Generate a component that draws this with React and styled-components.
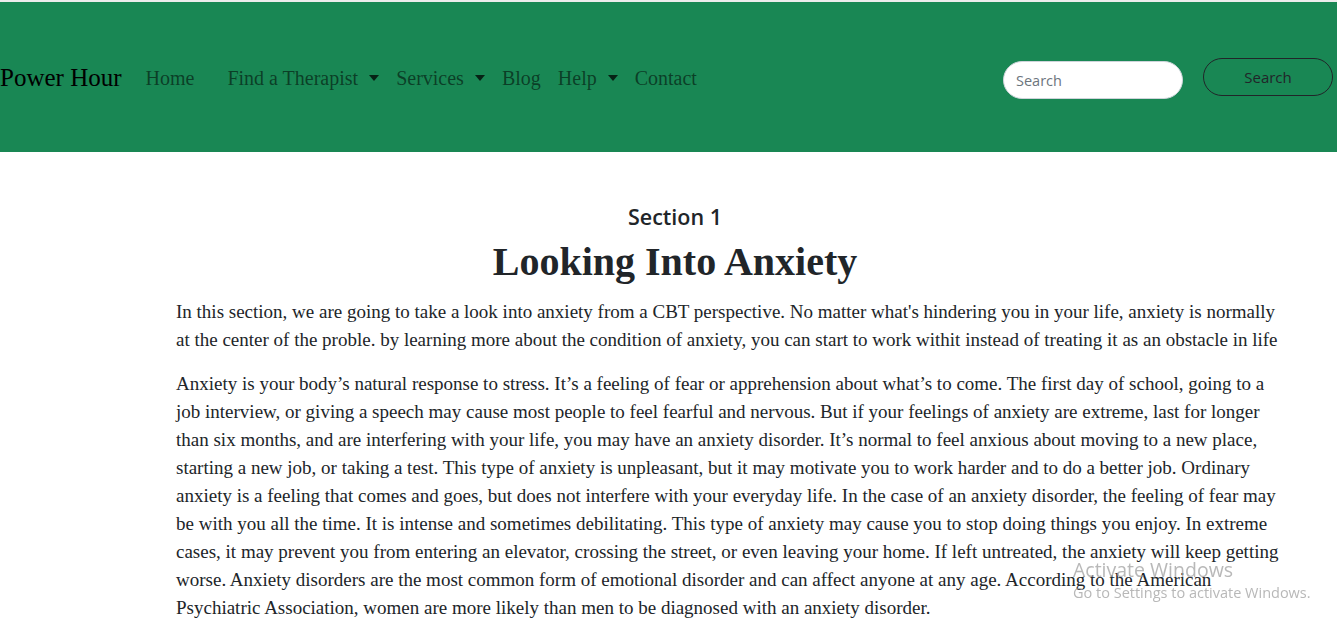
import React from "react";
import styled, { createGlobalStyle } from "styled-components";

const GlobalStyle = createGlobalStyle`
  html, body {
    margin: 0;
    padding: 0;
    background: #fff;
    overflow: hidden;
  }
  body {
    font-family: "Liberation Serif", "Times New Roman", serif;
    color: #212529;
  }
`;

const navLinks = [
  { label: "Home", wide: true },
  { label: "Find a Therapist", caret: true },
  { label: "Services", caret: true },
  { label: "Blog" },
  { label: "Help", caret: true },
  { label: "Contact" },
];

const paragraphs = [
  "In this section, we are going to take a look into anxiety from a CBT perspective. No matter what's hindering you in your life, anxiety is normally at the center of the proble. by learning more about the condition of anxiety, you can start to work withit instead of treating it as an obstacle in life",
  "Anxiety is your body’s natural response to stress. It’s a feeling of fear or apprehension about what’s to come. The first day of school, going to a job interview, or giving a speech may cause most people to feel fearful and nervous. But if your feelings of anxiety are extreme, last for longer than six months, and are interfering with your life, you may have an anxiety disorder. It’s normal to feel anxious about moving to a new place, starting a new job, or taking a test. This type of anxiety is unpleasant, but it may motivate you to work harder and to do a better job. Ordinary anxiety is a feeling that comes and goes, but does not interfere with your everyday life. In the case of an anxiety disorder, the feeling of fear may be with you all the time. It is intense and sometimes debilitating. This type of anxiety may cause you to stop doing things you enjoy. In extreme cases, it may prevent you from entering an elevator, crossing the street, or even leaving your home. If left untreated, the anxiety will keep getting worse. Anxiety disorders are the most common form of emotional disorder and can affect anyone at any age. According to the American Psychiatric Association, women are more likely than men to be diagnosed with an anxiety disorder.",
];

export default function App() {
  return (
    <>
      <GlobalStyle />
      <Page>
        <Navbar>
          <Brand href="#">Power Hour</Brand>
          <NavList>
            {navLinks.map((link) => (
              <NavItem key={link.label}>
                {link.label}
                {link.caret && <Caret />}
              </NavItem>
            ))}
          </NavList>
          <SearchForm onSubmit={(e) => e.preventDefault()}>
            <SearchInput type="search" placeholder="Search" />
            <SearchButton type="submit">Search</SearchButton>
          </SearchForm>
        </Navbar>

        <Main>
          <Heading>
            <SectionLabel>Section 1</SectionLabel>
            <Title>Looking Into Anxiety</Title>
          </Heading>
          <Body>
            {paragraphs.map((text, i) => (
              <Paragraph key={i}>{text}</Paragraph>
            ))}
          </Body>
        </Main>

        <Watermark>
          <WatermarkTitle>Activate Windows</WatermarkTitle>
          <WatermarkSub>Go to Settings to activate Windows.</WatermarkSub>
        </Watermark>
      </Page>
    </>
  );
}

const Page = styled.div`
  padding-top: 2px;
  min-height: 628px;
  background: linear-gradient(#ececec 0 2px, #fff 2px);
`;

const Navbar = styled.nav`
  height: 150px;
  background: #198754;
  display: flex;
  align-items: center;
`;

const Brand = styled.a`
  font-size: 25px;
  color: #000;
  text-decoration: none;
  margin-right: 24px;
  line-height: 1;
`;

const NavList = styled.ul`
  list-style: none;
  margin: 0;
  padding: 0;
  display: flex;
  align-items: center;
  flex: 1;
  padding-top: 2px;
`;

const NavItem = styled.li`
  font-size: 20px;
  color: rgba(0, 0, 0, 0.55);
  padding: 0 8.5px;
  display: flex;
  align-items: center;
  cursor: pointer;
  &:first-child {
    padding: 0 33px 0 0;
  }
  &:nth-child(2) {
    padding-left: 0;
  }
`;

const Caret = styled.span`
  display: inline-block;
  margin-left: 11px;
  width: 0;
  height: 0;
  border-top: 6px solid rgba(0, 0, 0, 0.75);
  border-left: 5px solid transparent;
  border-right: 5px solid transparent;
`;

const SearchForm = styled.form`
  display: flex;
  align-items: center;
  gap: 20px;
  margin-right: 4px;
`;

const SearchInput = styled.input`
  width: 180px;
  height: 38px;
  box-sizing: border-box;
  margin-top: 6px;
  border: 1px solid #ced4da;
  border-radius: 19px;
  padding: 0 12px;
  font-family: "Open Sans", "Noto Sans", sans-serif;
  font-size: 14.5px;
  color: #212529;
  outline: none;
  &::placeholder {
    color: #6c757d;
  }
`;

const SearchButton = styled.button`
  width: 130px;
  height: 38px;
  box-sizing: border-box;
  border: 1px solid #212529;
  border-radius: 19px;
  background: transparent;
  font-family: "Open Sans", "Noto Sans", sans-serif;
  font-size: 15px;
  color: #212529;
  cursor: pointer;
`;

const Main = styled.main`
  padding-top: 52px;
`;

const Heading = styled.header`
  text-align: center;
  padding-left: 13px;
`;

const SectionLabel = styled.h4`
  margin: 0;
  font-family: "Open Sans", "Noto Sans", sans-serif;
  font-size: 21.5px;
  font-weight: 600;
  line-height: 1.2;
`;

const Title = styled.h1`
  margin: 8px 0 12px;
  font-size: 40px;
  font-weight: 700;
  line-height: 1.2;
`;

const Body = styled.section`
  margin-left: 176px;
  width: 1108px;
`;

const Paragraph = styled.p`
  margin: 0 0 16px;
  font-size: 19px;
  line-height: 28px;
`;

const Watermark = styled.div`
  position: fixed;
  left: 1073px;
  top: 558px;
  font-family: "Open Sans", "Noto Sans", sans-serif;
  color: rgba(160, 160, 160, 0.75);
  pointer-events: none;
`;

const WatermarkTitle = styled.div`
  font-size: 19.5px;
  line-height: 24px;
`;

const WatermarkSub = styled.div`
  font-size: 14.5px;
  line-height: 18px;
  margin-top: 2px;
`;
